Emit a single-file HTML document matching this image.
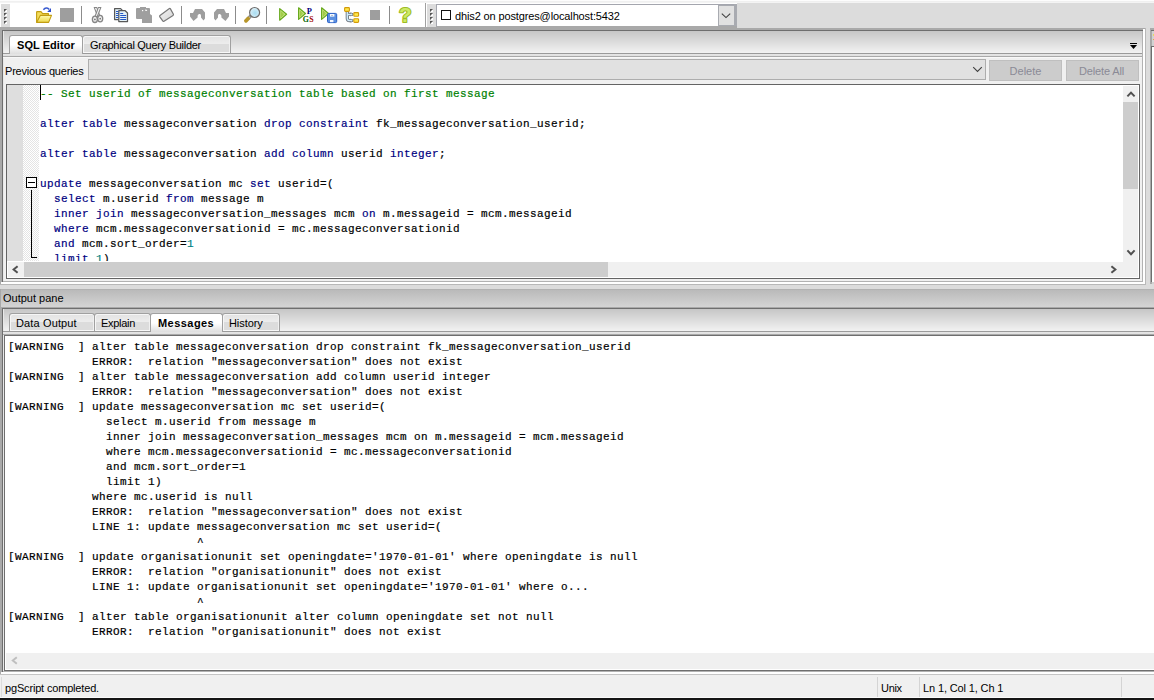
<!DOCTYPE html>
<html><head><meta charset="utf-8"><title>Query</title>
<style>
*{box-sizing:border-box;margin:0;padding:0}
html,body{width:1154px;height:700px;overflow:hidden;background:#f0f0f0}
body{position:relative;font-family:"Liberation Sans",sans-serif;font-size:11px;color:#000}
.abs{position:absolute}
.ui{font-family:"Liberation Sans",sans-serif;font-size:11px;white-space:pre;line-height:13px}
.mono{font-family:"Liberation Mono",monospace;font-size:11px;letter-spacing:0.4px;-webkit-text-stroke:0.2px currentColor;white-space:pre;line-height:15px}
.k{color:#00007f}.c{color:#007f00}.n{color:#007f7f}
</style></head><body>
<!-- toolbar -->
<div class="abs" style="left:0px;top:0px;width:1154px;height:1px;background:#fdfdfd"></div>
<div class="abs" style="left:0px;top:1px;width:1154px;height:2px;background:linear-gradient(#eeeeee,#f6f6f6)"></div>
<div class="abs" style="left:0px;top:3px;width:737px;height:24px;background:#fff"></div>
<div class="abs" style="left:737px;top:3px;width:417px;height:25px;background:#dcdcdc"></div>
<div class="abs" style="left:1px;top:4px;width:9px;height:23px;background:#dcdcdc"></div>
<div class="abs" style="left:427px;top:4px;width:9px;height:23px;background:#dcdcdc"></div>
<!--TB-->
<svg class="abs" id="tb" style="left:0;top:0" width="440" height="28" viewBox="0 0 440 28">
<defs>
<linearGradient id="gFold" x1="0" y1="0" x2="0" y2="1"><stop offset="0" stop-color="#fffbb0"/><stop offset="1" stop-color="#ecd84c"/></linearGradient>
<linearGradient id="gPlay" x1="0" y1="0" x2="1" y2="0"><stop offset="0" stop-color="#90c030"/><stop offset="1" stop-color="#c0e074"/></linearGradient>
<radialGradient id="gLens" cx="0.55" cy="0.55" r="0.6"><stop offset="0" stop-color="#a8dcf0"/><stop offset="0.7" stop-color="#cdeaf6"/><stop offset="1" stop-color="#ffffff"/></radialGradient>
<linearGradient id="gEr" x1="0" y1="0" x2="1" y2="1"><stop offset="0" stop-color="#f4f4f4"/><stop offset="1" stop-color="#d4d4d4"/></linearGradient>
</defs>
<!-- grippers -->
<g id="gripdots" fill="#555">
<rect x="4" y="9" width="2" height="2"/><rect x="4" y="13" width="2" height="2"/><rect x="4" y="17" width="2" height="2"/><rect x="4" y="21" width="2" height="2"/>
<rect x="430" y="9" width="2" height="2"/><rect x="430" y="13" width="2" height="2"/><rect x="430" y="17" width="2" height="2"/><rect x="430" y="21" width="2" height="2"/>
</g>
<g fill="#fff">
<rect x="5" y="10" width="2" height="2"/><rect x="5" y="14" width="2" height="2"/><rect x="5" y="18" width="2" height="2"/><rect x="5" y="22" width="2" height="2"/>
<rect x="431" y="10" width="2" height="2"/><rect x="431" y="14" width="2" height="2"/><rect x="431" y="18" width="2" height="2"/><rect x="431" y="22" width="2" height="2"/>
</g>
<g fill="#555">
<path d="M4 9h3l-3 3z"/><path d="M4 13h3l-3 3z"/><path d="M4 17h3l-3 3z"/><path d="M4 21h3l-3 3z"/>
<path d="M430 9h3l-3 3z"/><path d="M430 13h3l-3 3z"/><path d="M430 17h3l-3 3z"/><path d="M430 21h3l-3 3z"/>
</g>
<!-- separators -->
<g fill="#8c8c8c"><rect x="81" y="6" width="1" height="18"/><rect x="181" y="6" width="1" height="18"/><rect x="235" y="6" width="1" height="18"/><rect x="266" y="6" width="1" height="18"/><rect x="389" y="6" width="1" height="18"/></g>
<rect x="425" y="3" width="1" height="24" fill="#a0a0a0"/>
<!-- open folder -->
<path d="M36.6 22.2V12.2Q36.6 11.6 37.2 11.6H41L42.6 13.6H48.4V15.5" fill="#f3dc5a" stroke="#c29d12" stroke-width="1.1" stroke-linejoin="round"/>
<path d="M36.6 22.4L40.3 15.4H51.5L48.6 22.4Z" fill="url(#gFold)" stroke="#c29d12" stroke-width="1.1" stroke-linejoin="round"/>
<path d="M43.4 9.8Q46 6.6 49.2 9.4" fill="none" stroke="#3a5bd0" stroke-width="1.5"/>
<path d="M51 8V11.9H47.2Z" fill="#2f50cc"/>
<!-- grey square 14 -->
<rect x="60" y="8" width="14" height="14" fill="#9e9e9e"/>
<!-- scissors -->
<g stroke="#868686" stroke-width="1.35" fill="#f4f4f4" stroke-linejoin="round">
<path d="M94.2 7.4L96.7 7.4L99.9 16L98 17.2Z" stroke-width="1.05"/>
<path d="M100.9 7.4L98.4 7.4L95.2 16L97 17.2Z" stroke-width="1.05"/>
<ellipse cx="94.9" cy="19.3" rx="2.5" ry="3.2"/>
<ellipse cx="100.2" cy="18.6" rx="2.5" ry="3.2"/>
</g>
<circle cx="94.9" cy="19.4" r="0.9" fill="#777"/><circle cx="100.2" cy="18.7" r="0.9" fill="#777"/>
<!-- copy -->
<g stroke="#585858" stroke-width="1.25" fill="#e6f3f8" stroke-linejoin="round">
<path d="M114.6 8.6H120.6L122.6 10.6V19.6H114.6Z"/>
<path d="M118.8 10.7H125.2L127.5 13V21.5H118.8Z"/>
</g>
<g fill="#2356c4"><rect x="116" y="11" width="2.4" height="1"/><rect x="116" y="13" width="2.4" height="1"/><rect x="116" y="15" width="2.4" height="1"/><rect x="116" y="17" width="2.4" height="1"/>
<rect x="120.2" y="13" width="3" height="1"/><rect x="120.2" y="15" width="6" height="1"/><rect x="120.2" y="17" width="6" height="1"/><rect x="120.2" y="19" width="6" height="1"/></g>
<!-- paste (disabled) -->
<path d="M137 8H140V7H146V8H149Q150 8 150 9V14L152 15.6V23H142V19H137Q136 19 136 18V9Q136 8 137 8Z" fill="#9f9f9f"/>
<rect x="142" y="10" width="1.2" height="1.2" fill="#fff"/><path d="M145.3 9.4H146.3L147.3 11H145.3Z" fill="#fff"/>
<!-- eraser -->
<path d="M170.3 8.6L173.4 14.2Q173.7 15 173 15.4L164 21.2Q163.2 21.6 162.7 20.9L159.7 16.6Q159.3 15.8 160 15.4L169.4 8.6Q170 8.2 170.3 8.6Z" fill="url(#gEr)" stroke="#787878" stroke-width="1.2"/>
<!-- undo / redo -->
<path id="undo" d="M195 9H202L205 12.5V18.5L203.5 20.5L201 17.5V15.6L200.3 13.9H198.9L197.6 15.6V17.5L193.5 21L190 16.5V13H193Z" fill="#9e9e9e"/>
<path d="M224 9H217L214 12.5V18.5L215.5 20.5L218 17.5V15.6L218.7 13.9H220.1L221.4 15.6V17.5L225.5 21L229 16.5V13H226Z" fill="#9e9e9e"/>
<!-- magnifier -->
<path d="M251 15.6L247.6 19.2" stroke="#8e8e8e" stroke-width="3.4" stroke-linecap="butt"/>
<path d="M249.6 17.1L248.6 18.2" stroke="#e8e8e8" stroke-width="1.6"/>
<path d="M248.2 18.5L245.9 20.9" stroke="#b8962a" stroke-width="3.7" stroke-linecap="round"/>
<circle cx="254.6" cy="12.5" r="5" fill="url(#gLens)" stroke="#6c6c6c" stroke-width="1.2"/>
<!-- play -->
<path d="M279.7 8.6L286.6 14.3L279.7 20.2Z" fill="url(#gPlay)" stroke="#66a81c" stroke-width="1.15" stroke-linejoin="round"/><path d="M280.7 10.5L284.9 14.3L280.7 18.3Z" fill="none" stroke="#cde88c" stroke-width="0.7" stroke-linejoin="round"/>
<!-- play pgs -->
<path d="M298.6 7.8L305.5 13.5L298.6 19.4Z" fill="url(#gPlay)" stroke="#66a81c" stroke-width="1.15" stroke-linejoin="round"/><path d="M299.6 9.7L303.8 13.5L299.6 17.5Z" fill="none" stroke="#cde88c" stroke-width="0.7" stroke-linejoin="round"/>
<g opacity="0.999"><text x="306.8" y="13.9" font-family="Liberation Serif,serif" font-weight="bold" font-size="8.4" fill="#00007c">P</text>
<text x="302.7" y="21.9" font-family="Liberation Serif,serif" font-weight="bold" font-size="7.8" fill="#006400">G</text>
<text x="309.2" y="21.9" font-family="Liberation Serif,serif" font-weight="bold" font-size="7.8" fill="#a00000">S</text></g>
<!-- play save -->
<path d="M321.6 7.8L328.5 13.5L321.6 19.4Z" fill="url(#gPlay)" stroke="#66a81c" stroke-width="1.15" stroke-linejoin="round"/><path d="M322.6 9.7L326.8 13.5L322.6 17.5Z" fill="none" stroke="#cde88c" stroke-width="0.7" stroke-linejoin="round"/>
<rect x="327.5" y="13.4" width="9.2" height="9.2" rx="1.2" fill="#5c90e0" stroke="#2860c8" stroke-width="1"/>
<rect x="330" y="14" width="4.4" height="2.6" fill="#f4f8ff"/><rect x="331" y="15" width="2" height="0.7" fill="#a0a8b8"/>
<rect x="330" y="20" width="3.4" height="2.2" fill="#f4f8ff"/>
<!-- tree -->
<path d="M347.3 11.8V18.2Q347.3 20.6 349.6 20.6H351.6M347.5 14.4H351.6" fill="none" stroke="#687078" stroke-width="3.2" stroke-linecap="round"/><path d="M350.6 12.2L353.4 14.4L350.6 16.6ZM350.6 18.4L353.4 20.6L350.6 22.8Z" fill="#687078"/>
<path d="M347.3 11.8V18.2Q347.3 20.6 349.6 20.6H351.6M347.5 14.4H351.6" fill="none" stroke="#cfeafa" stroke-width="1.5" stroke-linecap="round"/><path d="M351 13.3L352.5 14.4L351 15.5ZM351 19.5L352.5 20.6L351 21.7Z" fill="#cfeafa"/>
<g fill="#ffe84a" stroke="#d29a0a" stroke-width="1.1"><rect x="344.6" y="7.6" width="4.8" height="3.8" rx="0.8"/><rect x="353.8" y="12.6" width="4.8" height="3.6" rx="0.8"/><rect x="353.8" y="18.8" width="4.8" height="3.6" rx="0.8"/></g>
<!-- stop -->
<rect x="370" y="10" width="10" height="10" fill="#9e9e9e"/>
<!-- help -->
<g opacity="0.999"><text x="398.9" y="22.2" font-family="Liberation Sans,sans-serif" font-weight="bold" font-size="20.5" fill="#cdea66" stroke="#9dbb24" stroke-width="2.2" stroke-linejoin="round" paint-order="stroke fill">?</text></g>
</svg>
<!--/TB-->
<!-- connection combo -->
<div class="abs" style="left:436px;top:4px;width:301px;height:23px;background:#fff;border:1px solid #a4a6ae;border-bottom-color:#a9a9a9"></div>
<div class="abs" style="left:734px;top:4px;width:3px;height:22px;background:#a9abb1"></div>
<div class="abs" style="left:718px;top:5px;width:17px;height:21px;background:#e1e1e1;border:1px solid #a9abb1"></div>
<svg class="abs" style="left:721px;top:13px" width="10" height="6"><path d="M0.8 0.6L5 4.6L9.2 0.6" fill="none" stroke="#404040" stroke-width="1.1"/></svg>
<div class="abs" style="left:441px;top:10px;width:10px;height:10px;background:#fff;border:1px solid #111"></div>
<div class="abs ui" style="left:455px;top:10px;letter-spacing:-0.13px">dhis2 on postgres@localhost:5432</div>
<!-- editor pane frame -->
<div class="abs" style="left:0px;top:27px;width:737px;height:3px;background:#a9a9a9"></div>
<div class="abs" style="left:737px;top:28px;width:408px;height:2px;background:#a9a9a9"></div>
<div class="abs" style="left:0px;top:30px;width:2px;height:254px;background:#a9a9a9"></div>
<div class="abs" style="left:2px;top:30px;width:1141px;height:1px;background:#6e6e6e"></div>
<div class="abs" style="left:2px;top:30px;width:1px;height:252px;background:#6e6e6e"></div>
<div class="abs" style="left:3px;top:31px;width:1139px;height:250px;background:#f0f0f0"></div>
<div class="abs" style="left:1142px;top:31px;width:1px;height:251px;background:#b2b2b2"></div>
<div class="abs" style="left:3px;top:281px;width:1140px;height:1px;background:#b2b2b2"></div>
<div class="abs" style="left:1143px;top:29px;width:2px;height:255px;background:#fff"></div>
<div class="abs" style="left:1px;top:282px;width:1144px;height:2px;background:#fff"></div>
<div class="abs" style="left:1145px;top:28px;width:1px;height:256px;background:#b8b8b8"></div>
<div class="abs" style="left:1146px;top:28px;width:4px;height:256px;background:#dcdcdc"></div>
<div class="abs" style="left:1150px;top:28px;width:2px;height:256px;background:#a9a9a9"></div>
<div class="abs" style="left:1152px;top:28px;width:2px;height:2px;background:#a9a9a9"></div>
<div class="abs" style="left:1152px;top:30px;width:2px;height:254px;background:#d2d2d2"></div>
<div class="abs" style="left:1151px;top:30px;width:3px;height:1px;background:#6e6e6e"></div>
<div class="abs" style="left:1151px;top:46px;width:1px;height:236px;background:#6e6e6e"></div>
<div class="abs" style="left:1152px;top:46px;width:2px;height:1px;background:#6e6e6e"></div>
<div class="abs" style="left:1152px;top:47px;width:2px;height:235px;background:#fff"></div>
<div class="abs" style="left:1153px;top:34px;width:1px;height:2px;background:#e8d860"></div>
<div class="abs" style="left:1153px;top:39px;width:1px;height:1px;background:#e8a840"></div>
<!-- editor tabs -->
<div class="abs" style="left:3px;top:31px;width:1139px;height:23px;background:linear-gradient(#c6c6c6,#f4f4f4)"></div>
<div class="abs" style="left:3px;top:31px;width:1px;height:250px;background:#e8e8e8"></div>
<div class="abs" style="left:3px;top:53px;width:1139px;height:1px;background:#9a9a9a"></div>
<div class="abs" style="left:3px;top:54px;width:1139px;height:2px;background:linear-gradient(#e6e6e6,#e0e0e0)"></div>
<div class="abs" style="left:3px;top:56px;width:1139px;height:1px;background:#a9a9a9"></div>
<div class="abs" style="left:3px;top:57px;width:1139px;height:1px;background:#f8f8f8"></div>
<div class="abs" style="left:82px;top:35px;width:149px;height:18px;border:1px solid #a0a0a0;border-bottom:none;border-radius:3px 3px 0 0;background:linear-gradient(#e2e2e2 0,#ededed 8px,#dcdcdc 8px,#dcdcdc 100%);box-shadow:inset 1px 1px 0 #f6f6f6,inset -1px 0 0 #f0f0f0"></div>
<div class="abs" style="left:83px;top:52px;width:147px;height:1px;background:#f8f8f8"></div>
<div class="abs" style="left:9px;top:35px;width:74px;height:19px;border:1px solid #a0a0a0;border-bottom:none;border-radius:3px 3px 0 0;background:linear-gradient(#fff 0,#fff 9px,#dedede 100%)"></div>
<div class="abs ui" style="left:17px;top:39px;font-weight:bold;letter-spacing:0.05px">SQL Editor</div>
<div class="abs ui" style="left:90px;top:39px;letter-spacing:-0.28px">Graphical Query Builder</div>
<svg class="abs" style="left:1130px;top:43px" width="7" height="7"><rect x="0" y="0" width="7" height="1" fill="#000"/><path d="M0 2h7l-3.5 4z" fill="#000"/></svg>
<!-- previous queries -->
<div class="abs ui" style="left:5px;top:65px;letter-spacing:-0.21px">Previous queries</div>
<div class="abs" style="left:88px;top:59px;width:898px;height:21px;background:#e1e1e1;border:1px solid #adadad"></div>
<svg class="abs" style="left:972px;top:66px" width="11" height="7"><path d="M1.2 1.2L5.5 5.4L9.8 1.2" fill="none" stroke="#404040" stroke-width="1.1"/></svg>
<div class="abs" style="left:989px;top:60px;width:73px;height:21px;background:#cccccc;border:1px solid #bfbfbf"></div>
<div class="abs" style="left:1066px;top:60px;width:73px;height:21px;background:#cccccc;border:1px solid #bfbfbf"></div>
<div class="abs ui" style="left:989px;top:65px;width:73px;text-align:center;color:#8a8a96">Delete</div>
<div class="abs ui" style="left:1065px;top:65px;width:73px;text-align:center;color:#8a8a96;letter-spacing:-0.14px">Delete All</div>
<!-- editor -->
<div class="abs" style="left:6px;top:84px;width:1134px;height:195px;background:#fff;border:1px solid #646464"></div>
<div class="abs" style="left:7px;top:85px;width:16px;height:176px;background:#dedede"></div>
<div class="abs" style="left:23px;top:85px;width:16px;height:176px;background-color:#fff;background-image:conic-gradient(#fff 25%,#e4e4e4 0 50%,#fff 0 75%,#e4e4e4 0);background-size:2px 2px"></div>
<div class="abs" style="left:40px;top:85px;width:1px;height:15px;background:#000"></div>
<div class="abs" style="left:26px;top:177px;width:11px;height:11px;background:#fff;border:1px solid #000"></div>
<div class="abs" style="left:28px;top:182px;width:7px;height:1px;background:#000"></div>
<div class="abs" style="left:31px;top:190px;width:1px;height:68px;background:#000"></div>
<div class="abs" style="left:31px;top:257px;width:6px;height:1px;background:#000"></div>
<div class="abs mono" id="ed" style="left:40px;top:87px;height:174px;overflow:hidden;width:1083px"><span class="c">-- Set userid of messageconversation table based on first message</span>

<span class="k">alter table</span> messageconversation <span class="k">drop constraint</span> fk_messageconversation_userid;

<span class="k">alter table</span> messageconversation <span class="k">add column</span> userid <span class="k">integer</span>;

<span class="k">update</span> messageconversation mc <span class="k">set</span> userid=(
  <span class="k">select</span> m.userid <span class="k">from</span> message m
  <span class="k">inner join</span> messageconversation_messages mcm <span class="k">on</span> m.messageid = mcm.messageid
  <span class="k">where</span> mcm.messageconversationid = mc.messageconversationid
  <span class="k">and</span> mcm.sort_order=<span class="n">1</span>
  <span class="k">limit</span> <span class="n">1</span>)</div>
<div class="abs" style="left:1123px;top:86px;width:15px;height:191px;background:#f0f0f0"></div>
<div class="abs" style="left:1123px;top:102px;width:15px;height:87px;background:#cdcdcd"></div>
<svg class="abs" style="left:1126px;top:90px" width="10" height="8"><path d="M1.4 6.4L5 2.6L8.6 6.4" fill="none" stroke="#505050" stroke-width="2"/></svg>
<svg class="abs" style="left:1126px;top:249px" width="10" height="8"><path d="M1.4 1.4L5 5.2L8.6 1.4" fill="none" stroke="#505050" stroke-width="2"/></svg>
<div class="abs" style="left:8px;top:262px;width:1115px;height:15px;background:#f0f0f0"></div>
<div class="abs" style="left:24px;top:262px;width:584px;height:15px;background:#cdcdcd"></div>
<svg class="abs" style="left:11px;top:265px" width="8" height="9"><path d="M6.6 1.2L2.6 4.5L6.6 7.8" fill="none" stroke="#505050" stroke-width="2"/></svg>
<svg class="abs" style="left:1110px;top:265px" width="8" height="9"><path d="M1.4 1.2L5.4 4.5L1.4 7.8" fill="none" stroke="#505050" stroke-width="2"/></svg>
<!-- sash + output pane -->
<div class="abs" style="left:0px;top:284px;width:1146px;height:1px;background:#b8b8b8"></div>
<div class="abs" style="left:1146px;top:284px;width:8px;height:1px;background:#dcdcdc"></div>
<div class="abs" style="left:0px;top:285px;width:1154px;height:4px;background:#dcdcdc"></div>
<div class="abs" style="left:0px;top:289px;width:1154px;height:1px;background:#b2b2b2"></div>
<div class="abs" style="left:0px;top:290px;width:1154px;height:17px;background:linear-gradient(#bababa,#d4d4d4)"></div>
<div class="abs" style="left:0px;top:289px;width:1px;height:386px;background:#a9a9a9"></div>
<div class="abs ui" style="left:3px;top:292px">Output pane</div>
<div class="abs" style="left:1px;top:307px;width:1153px;height:1px;background:#a9a9a9"></div>
<div class="abs" style="left:1px;top:307px;width:1px;height:366px;background:#a9a9a9"></div>
<div class="abs" style="left:2px;top:308px;width:1152px;height:1px;background:#6e6e6e"></div>
<div class="abs" style="left:2px;top:308px;width:1px;height:364px;background:#6e6e6e"></div>
<div class="abs" style="left:3px;top:309px;width:1151px;height:23px;background:linear-gradient(#c6c6c6,#f4f4f4)"></div>
<div class="abs" style="left:3px;top:309px;width:1px;height:362px;background:#e8e8e8"></div>
<div class="abs" style="left:3px;top:331px;width:1151px;height:1px;background:#9a9a9a"></div>
<div class="abs" style="left:3px;top:332px;width:1151px;height:2px;background:linear-gradient(#e6e6e6,#e0e0e0)"></div>
<div class="abs" style="left:3px;top:334px;width:1151px;height:1px;background:#a9a9a9"></div>
<div class="abs" style="left:9px;top:313px;width:86px;height:18px;border:1px solid #a0a0a0;border-bottom:none;border-radius:3px 3px 0 0;background:linear-gradient(#e2e2e2 0,#ededed 8px,#dcdcdc 8px,#dcdcdc 100%);box-shadow:inset 1px 1px 0 #f6f6f6,inset -1px 0 0 #f0f0f0"></div>
<div class="abs" style="left:10px;top:330px;width:84px;height:1px;background:#f8f8f8"></div>
<div class="abs" style="left:94px;top:313px;width:57px;height:18px;border:1px solid #a0a0a0;border-bottom:none;border-radius:3px 3px 0 0;background:linear-gradient(#e2e2e2 0,#ededed 8px,#dcdcdc 8px,#dcdcdc 100%);box-shadow:inset 1px 1px 0 #f6f6f6,inset -1px 0 0 #f0f0f0"></div>
<div class="abs" style="left:95px;top:330px;width:55px;height:1px;background:#f8f8f8"></div>
<div class="abs" style="left:222px;top:313px;width:58px;height:18px;border:1px solid #a0a0a0;border-bottom:none;border-radius:3px 3px 0 0;background:linear-gradient(#e2e2e2 0,#ededed 8px,#dcdcdc 8px,#dcdcdc 100%);box-shadow:inset 1px 1px 0 #f6f6f6,inset -1px 0 0 #f0f0f0"></div>
<div class="abs" style="left:223px;top:330px;width:56px;height:1px;background:#f8f8f8"></div>
<div class="abs" style="left:150px;top:313px;width:73px;height:19px;border:1px solid #a0a0a0;border-bottom:none;border-radius:3px 3px 0 0;background:linear-gradient(#fff 0,#fff 9px,#dedede 100%)"></div>
<div class="abs ui" style="left:16px;top:317px;letter-spacing:0.13px">Data Output</div>
<div class="abs ui" style="left:101px;top:317px;letter-spacing:-0.3px">Explain</div>
<div class="abs ui" style="left:158px;top:317px;font-weight:bold;letter-spacing:0.45px">Messages</div>
<div class="abs ui" style="left:229px;top:317px;letter-spacing:-0.07px">History</div>
<div class="abs" style="left:4px;top:335px;width:1150px;height:336px;background:#fff;border:1px solid #6e6e6e;border-right:none"></div>
<div class="abs" style="left:6px;top:653px;width:1148px;height:16px;background:#f0f0f0"></div>
<svg class="abs" style="left:10px;top:656px" width="8" height="9"><path d="M6.8 1.2L2.8 4.5L6.8 7.8" fill="none" stroke="#bfbfbf" stroke-width="2"/></svg>
<div class="abs mono" id="msg" style="left:8px;top:340px">[WARNING  ] alter table messageconversation drop constraint fk_messageconversation_userid
            ERROR:  relation "messageconversation" does not exist
[WARNING  ] alter table messageconversation add column userid integer
            ERROR:  relation "messageconversation" does not exist
[WARNING  ] update messageconversation mc set userid=(
              select m.userid from message m
              inner join messageconversation_messages mcm on m.messageid = mcm.messageid
              where mcm.messageconversationid = mc.messageconversationid
              and mcm.sort_order=1
              limit 1)
            where mc.userid is null
            ERROR:  relation "messageconversation" does not exist
            LINE 1: update messageconversation mc set userid=(
                           ^
[WARNING  ] update organisationunit set openingdate='1970-01-01' where openingdate is null
            ERROR:  relation "organisationunit" does not exist
            LINE 1: update organisationunit set openingdate='1970-01-01' where o...
                           ^
[WARNING  ] alter table organisationunit alter column openingdate set not null
            ERROR:  relation "organisationunit" does not exist</div>
<div class="abs" style="left:3px;top:671px;width:1151px;height:1px;background:#b2b2b2"></div>
<div class="abs" style="left:1px;top:672px;width:1153px;height:2px;background:#fff"></div>
<div class="abs" style="left:0px;top:674px;width:1154px;height:1px;background:#c4c4c4"></div>
<!-- status bar -->
<div class="abs" style="left:0px;top:675px;width:1154px;height:23px;background:#f0f0f0"></div>
<div class="abs" style="left:1px;top:677px;width:1px;height:20px;background:#dcdcdc"></div>
<div class="abs ui" style="left:5px;top:682px;letter-spacing:-0.17px">pgScript completed.</div>
<div class="abs" style="left:877px;top:677px;width:1px;height:20px;background:#d4d4d4"></div>
<div class="abs" style="left:919px;top:677px;width:1px;height:20px;background:#d4d4d4"></div>
<div class="abs" style="left:1121px;top:677px;width:1px;height:20px;background:#d4d4d4"></div>
<div class="abs ui" style="left:881px;top:682px;letter-spacing:-0.3px">Unix</div>
<div class="abs ui" style="left:923px;top:682px;letter-spacing:-0.13px">Ln 1, Col 1, Ch 1</div>
<div class="abs" style="left:0px;top:697px;width:1154px;height:1px;background:#fafafa"></div>
<div class="abs" style="left:0px;top:698px;width:1154px;height:2px;background:#151515"></div>
</body></html>
